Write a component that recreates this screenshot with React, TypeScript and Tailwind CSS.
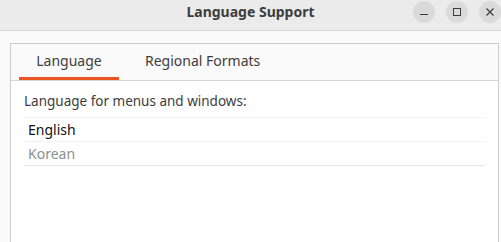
import React from "react";

export default function App() {
  const font = { fontFamily: '"Noto Sans", "Open Sans", sans-serif' };
  return (
    <div className="w-[501px] h-[242px] overflow-hidden bg-[#fafafa] flex flex-col" style={font}>
      <div className="h-[31px] shrink-0 bg-[#ebebeb] border-b border-[#d6d6d6] relative flex items-center justify-center">
        <span className="text-[14px] font-bold text-[#3d3d3d] leading-none -mt-[7px]">Language Support</span>
        <div className="absolute top-[1px] left-[413px] flex gap-[11px]">
          <div className="w-[22px] h-[22px] rounded-full bg-[#dadada] flex items-center justify-center">
            <svg width="10" height="10" viewBox="0 0 10 10"><rect x="1" y="7" width="8" height="1" fill="#3d3d3d" /></svg>
          </div>
          <div className="w-[22px] h-[22px] rounded-full bg-[#dadada] flex items-center justify-center">
            <svg width="10" height="10" viewBox="0 0 10 10"><rect x="1.5" y="1.5" width="7" height="7" fill="none" stroke="#3d3d3d" strokeWidth="1" /></svg>
          </div>
          <div className="w-[22px] h-[22px] rounded-full bg-[#dadada] flex items-center justify-center">
            <svg width="10" height="10" viewBox="0 0 10 10"><path d="M1.5 1.5 L8.5 8.5 M8.5 1.5 L1.5 8.5" stroke="#3d3d3d" strokeWidth="1.2" /></svg>
          </div>
        </div>
      </div>
      <div className="flex-1 pt-[12px] pl-[10px] pr-[2px]">
        <div className="h-full border border-[#cdcdcd] border-b-0 flex flex-col">
          <div className="h-[37px] shrink-0 border-b border-[#d6d6d6] flex px-[8px] gap-[8px]">
            <div className="w-[100px] flex flex-col">
              <div className="flex-1 flex items-center justify-center text-[14px] text-[#3d3d3d]">Language</div>
              <div className="h-[3px] bg-[#e95420]" />
            </div>
            <div className="px-[18px] flex items-center text-[14px] text-[#3d3d3d] pb-[3px]">Regional Formats</div>
          </div>
          <div className="flex-1 bg-white pl-[13px] pr-[13px]">
            <div className="h-[36px] flex items-center text-[13.5px] text-[#3d3d3d] pt-[5px]">Language for menus and windows:</div>
            <div className="border-t border-[#f3f3f3] h-[24px] flex items-center pl-[4px] text-[14px] text-[#111111]">English</div>
            <div className="border-t border-[#f3f3f3] h-[24px] flex items-center pl-[4px] text-[14px] text-[#8c9092]">Korean</div>
            <div className="border-t border-[#e6e6e6]" />
          </div>
        </div>
      </div>
    </div>
  );
}
